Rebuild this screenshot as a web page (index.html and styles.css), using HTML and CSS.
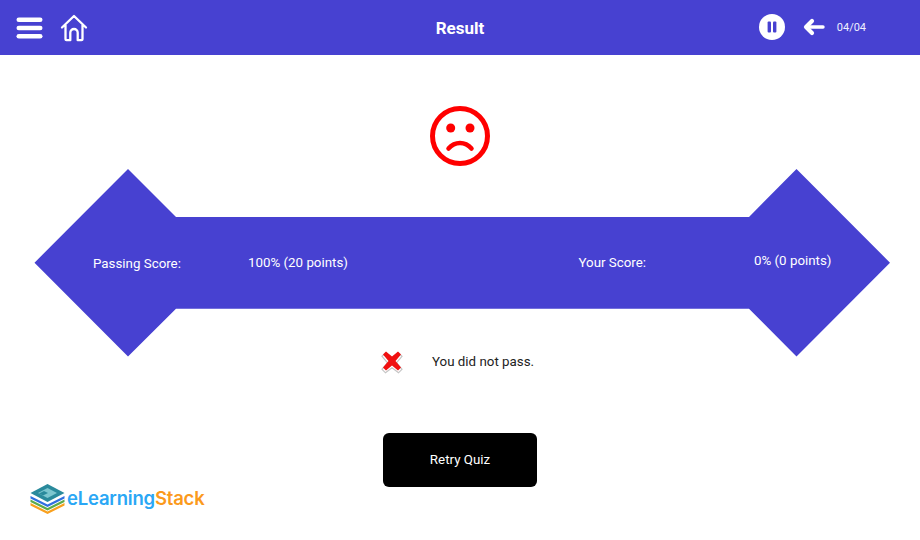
FILE: index.html
```html
<!DOCTYPE html>
<html lang="en">
<head>
<meta charset="utf-8">
<title>Result</title>
<link rel="stylesheet" href="styles.css">
</head>
<body>
<div class="slide">
  <header class="topbar">
    <div class="topbar-left">
      <svg class="icon-menu" width="28" height="22" viewBox="0 0 28 22"><g fill="#fff"><rect x="1.500" y="0.500" width="26" height="4.600" rx="2.300"/><rect x="1.500" y="8.700" width="26" height="4.600" rx="2.300"/><rect x="1.500" y="16.900" width="26" height="4.600" rx="2.300"/></g></svg>
      <svg class="icon-home" width="28" height="28" viewBox="0 0 28 28"><path d="M2 13.500 14 2l12 11.500M5.500 11v14.200a1 1 0 0 0 1 1h3.800v-7.500a3.700 3.700 0 0 1 7.400 0v7.500h3.800a1 1 0 0 0 1-1V11" fill="none" stroke="#fff" stroke-width="2.300" stroke-linecap="round" stroke-linejoin="round"/></svg>
    </div>
    <h1 class="title">Result</h1>
    <div class="topbar-right">
      <svg class="icon-pause" width="26" height="26" viewBox="0 0 26 26"><circle cx="13" cy="13" r="13" fill="#fff"/><rect x="8.600" y="7.500" width="3.400" height="11" rx="1" fill="#4741d1"/><rect x="14" y="7.500" width="3.400" height="11" rx="1" fill="#4741d1"/></svg>
      <svg class="icon-back" width="22" height="18" viewBox="0 0 22 18"><path d="M9 3 3 9l6 6" fill="none" stroke="#fff" stroke-width="4.200" stroke-linecap="round" stroke-linejoin="round"/><path d="M4 9h16" fill="none" stroke="#fff" stroke-width="3.400" stroke-linecap="round"/></svg>
      <span class="counter">04/04</span>
    </div>
  </header>

  <main class="content">
    <svg class="face" width="60" height="60" viewBox="0 0 60 60">
      <circle cx="30" cy="30" r="27.500" fill="none" stroke="#f00" stroke-width="5"/>
      <circle cx="20.700" cy="22" r="4.500" fill="#f00"/>
      <circle cx="40" cy="22" r="4.500" fill="#f00"/>
      <path d="M18.500 42.500C22 38.500 26 37 30 37s8 1.500 11.500 5.500" fill="none" stroke="#f00" stroke-width="4.500" stroke-linecap="round"/>
    </svg>

    <section class="banner">
      <svg class="banner-shape" width="856" height="188" viewBox="0 0 856 188"><path d="M0.500 93.700 94 0l48 48h573L762.500 0 856 93.700 762.500 187.500 715 139.700h-573L94 187.500Z" fill="#4741d1"/></svg>
      <span class="score label-pass">Passing Score:</span>
      <span class="score value-pass">100% (20 points)</span>
      <span class="score label-your">Your Score:</span>
      <span class="score value-your">0% (0 points)</span>
    </section>

    <div class="verdict">
      <svg class="cross" width="24" height="26" viewBox="0 0 24 26">
        <path d="M5.500 3 12 8l6.500-5 3.500 3.500-5.500 6.500 5.500 6.500-3.500 3.500-6.500-5-6.500 5L2 19.500 7.500 13 2 6.500Z" fill="#fff" stroke="#c4c4c4" stroke-width="1.200" transform="translate(0 1.800)"/>
        <path d="M6 3.500 12 8.500l6-5 3 3-5.500 6.500 5.500 6.500-3 3-6-5-6 5-3-3L8.500 13 3 6.500Z" fill="#f01010"/>
      </svg>
      <p class="verdict-text">You did not pass.</p>
    </div>

    <button class="retry" type="button">Retry Quiz</button>
  </main>

  <div class="logo">
    <svg width="35" height="30" viewBox="0 0 35 30">
      <path d="M0.500 19 17.500 27.500 34.500 19v2.500L17.500 30 0.500 21.500Z" fill="#f9a01e"/>
      <path d="M0.500 15.500 17.500 24 34.500 15.500V18L17.500 26.500 0.500 18Z" fill="#5cab4a"/>
      <path d="M0.500 12 17.500 20.500 34.500 12v2.500L17.500 23 0.500 14.500Z" fill="#2f6fe0"/>
      <path d="M0.500 9 17.500 0 34.500 9 17.500 18Z" fill="#2a8a9c"/>
      <path d="M8 9 17.500 4l9.500 5-9.500 5Z" fill="#7cc6cf"/>
      <path d="M9 9.500 14 7l4 2-5 2.500Z" fill="#2a8a9c"/>
    </svg>
    <span class="logo-text"><span class="logo-e">eLearning</span><span class="logo-s">Stack</span></span>
  </div>
</div>
</body>
</html>
```
FILE: styles.css
```css
* { box-sizing: border-box; margin: 0; padding: 0; }
html, body { width: 920px; height: 540px; overflow: hidden; background: #fff; }
body { font-family: Roboto, "Liberation Sans", sans-serif; color: #222; }

.slide { position: relative; width: 920px; height: 540px; display: flex; flex-direction: column; }

.topbar {
  height: 55px; background: #4741d1; color: #fff;
  display: grid; grid-template-columns: 1fr auto 1fr; align-items: center;
}
.topbar-left { display: flex; align-items: center; padding-left: 15px; gap: 17px; }
.title { font-size: 17px; font-weight: 700; line-height: 20px; padding-top: 1px; }
.topbar-right { display: flex; align-items: center; padding-left: 274.500px; padding-bottom: 2px; }
.icon-pause { flex: none; margin-right: 18px; }
.icon-back { flex: none; margin-right: 12px; }
.counter { font-size: 11px; line-height: 14px; color: #f0f0ff; padding-top: 3px; }

.content { flex: 1; display: flex; flex-direction: column; align-items: center; padding-top: 51px; }
.face { flex: none; }

.banner {
  position: relative; width: 856px; height: 188px; margin-top: 3.300px; margin-left: 4px; flex: none;
  color: #fff; font-size: 13.330px; line-height: 18px;
}
.banner-shape { position: absolute; left: 0; top: 0; }
.score { position: absolute; white-space: nowrap; }
.label-pass { left: 59px; top: 86px; }
.value-pass { left: 214px; top: 85px; }
.label-your { left: 544.500px; top: 85px; }
.value-your { left: 720px; top: 83px; }

.verdict { display: flex; align-items: center; margin-top: -12.300px; height: 32px; width: 156px; margin-left: -2px; flex: none; }
.cross { flex: none; margin-left: -1px; }
.verdict-text { font-size: 13.330px; line-height: 18px; margin-left: 28px; padding-top: 2px; color: #222; white-space: nowrap; }

.retry {
  width: 154px; height: 54px; margin-top: 56px; border: none; border-radius: 6px; flex: none;
  background: #000; color: #fff; font: 400 13.330px/16px Roboto, "Liberation Sans", sans-serif;
}

.logo { position: absolute; left: 30px; bottom: 26px; display: flex; align-items: center; gap: 2px; }
.logo-text { font-family: Inter, "Open Sans", sans-serif; font-size: 18.500px; font-weight: 600; line-height: 22px; letter-spacing: -0.200px; margin-bottom: 2px; }
.logo-e { color: #2aa7f5; }
.logo-s { color: #fb9a1c; }
```
